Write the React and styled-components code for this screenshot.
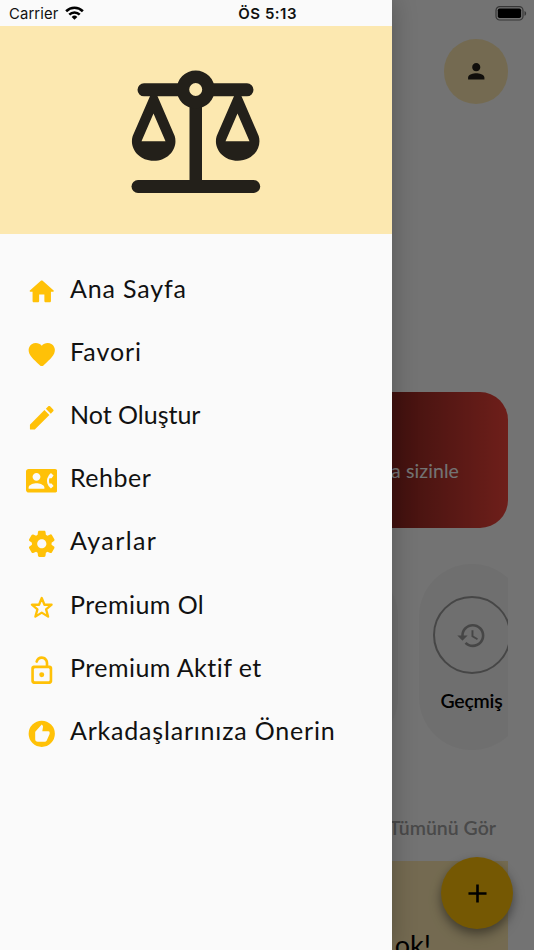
import React from "react";
import styled, { createGlobalStyle } from "styled-components";
import { MdContactPhone, MdRecommend, MdPerson, MdHistory, MdAdd } from "react-icons/md";

const GlobalStyle = createGlobalStyle`
  * { box-sizing: border-box; }
  body { margin: 0; background: #fafafa; font-family: Lato, sans-serif; }
  svg { display: block; flex: none; }
`;

const Screen = styled.div`
  position: relative;
  width: 534px;
  height: 950px;
  overflow: hidden;
  background: #fafafa;
`;

const Page = styled.main`
  display: flex;
  flex-direction: column;
  height: 950px;
  padding: 0 26px;
  overflow: hidden;
`;

const BatteryBar = styled.div`
  display: flex;
  justify-content: flex-end;
  height: 39px;
  flex: none;
  padding-top: 6px;
  margin-right: -20px;
`;

const Avatar = styled.div`
  display: flex;
  align-items: center;
  justify-content: center;
  align-self: flex-end;
  width: 64.5px;
  height: 64.5px;
  flex: none;
  border-radius: 50%;
  background: #fce8b0;
  color: #23201a;
`;

const Banner = styled.section`
  display: flex;
  align-items: center;
  justify-content: flex-end;
  height: 136px;
  flex: none;
  margin-top: 288.5px;
  padding: 20px 49px 0 0;
  border-radius: 28px;
  background: linear-gradient(90deg, #000 0%, #701d19 69%, #f0443a 100%);
  color: #fafafa;
  font-size: 19.5px;
  letter-spacing: 0.1px;
  white-space: nowrap;
`;

const Categories = styled.section`
  display: flex;
  justify-content: flex-start;
  gap: 21px;
  height: 186px;
  flex: none;
  margin-top: 36px;
  margin-left: 265.5px;
  overflow: hidden;
`;

const Category = styled.div`
  display: flex;
  flex-direction: column;
  align-items: center;
  flex: none;
  width: 106px;
  height: 186px;
  padding-top: 32px;
  border-radius: 53px;
  background: #f1f1f1;
  font-size: 19.5px;
  line-height: 24px;
  letter-spacing: -0.2px;
  font-weight: 600;
`;

const Ring = styled.div`
  display: flex;
  align-items: center;
  justify-content: center;
  width: 78px;
  height: 78px;
  flex: none;
  margin-bottom: 15px;
  border: 2.5px solid #999;
  border-radius: 50%;
  color: #999;
`;

const SeeAll = styled.div`
  align-self: flex-end;
  flex: none;
  margin: 66px 12px 0 0;
  color: #a0a0a0;
  font-size: 19.5px;
  line-height: 24px;
  font-weight: 600;
  white-space: nowrap;
`;

const NoteCard = styled.section`
  display: flex;
  justify-content: flex-end;
  height: 160px;
  flex: none;
  margin-top: 21px;
  padding: 66px 77px 0 0;
  background: #fce8b0;
  font-size: 27px;
  line-height: 36px;
`;

const AddButton = styled.button`
  position: absolute;
  right: 21px;
  bottom: 21px;
  display: flex;
  align-items: center;
  justify-content: center;
  width: 72px;
  height: 72px;
  padding: 0;
  border: 0;
  border-radius: 50%;
  background: #ffc107;
  color: #000;
  box-shadow: 0 4px 8px rgba(0, 0, 0, 0.28), 0 7px 14px rgba(0, 0, 0, 0.2);
`;

const Scrim = styled.div`
  position: absolute;
  inset: 0;
  background: rgba(0, 0, 0, 0.54);
`;

const Drawer = styled.aside`
  position: absolute;
  inset: 0 auto 0 0;
  display: flex;
  flex-direction: column;
  width: 392px;
  background: #fafafa;
  box-shadow: 2px 0 22px rgba(0, 0, 0, 0.22);
`;

const StatusBar = styled.div`
  display: grid;
  grid-template-columns: 55.5px 1fr auto;
  align-items: center;
  height: 26px;
  flex: none;
  padding: 1px 95px 0 9px;
  font-family: Inter, sans-serif;
  color: #111;
`;

const Carrier = styled.span`
  font-size: 14.8px;
  letter-spacing: 0.15px;
`;

const Clock = styled.span`
  font-size: 15px;
  font-weight: 600;
  letter-spacing: 0.5px;
`;

const DrawerHeader = styled.header`
  display: flex;
  justify-content: center;
  height: 208px;
  flex: none;
  padding-top: 44px;
  background: #fce8b0;
`;

const Menu = styled.nav`
  display: flex;
  flex-direction: column;
  padding: 26px 26px 0 25.5px;
`;

const MenuItem = styled.a`
  display: flex;
  align-items: center;
  gap: 13px;
  height: 63.15px;
  color: #ffc107;
`;

const Label = styled.span`
  margin-top: -7.5px;
  color: #111;
  font-size: 25px;
  line-height: 32px;
  letter-spacing: ${(p) => p.$spacing}px;
  font-variant-ligatures: none;
  white-space: nowrap;
`;

const paths = {
  home: "M10 19v-5h4v5c0 .55.45 1 1 1h3c.55 0 1-.45 1-1v-7h1.7c.46 0 .68-.57.33-.87L12.67 3.6c-.38-.34-.96-.34-1.34 0l-8.36 7.53c-.34.3-.13.87.33.87H5v7c0 .55.45 1 1 1h3c.55 0 1-.45 1-1z",
  heart: "M13.35 20.13c-.76.69-1.93.69-2.69-.01l-.11-.1C5.3 15.27 1.87 12.16 2 8.28c.06-1.7.93-3.33 2.34-4.29 2.64-1.8 5.9-.96 7.66 1.1 1.76-2.06 5.02-2.91 7.66-1.1 1.41.96 2.28 2.59 2.34 4.29.14 3.88-3.3 6.99-8.55 11.76l-.1.09z",
  edit: "M3 17.46v3.04c0 .28.22.5.5.5h3.04c.13 0 .26-.05.35-.15L17.81 9.94l-3.75-3.75L3.15 17.1c-.1.1-.15.22-.15.36zM20.71 7.04c.39-.39.39-1.02 0-1.41l-2.34-2.34c-.39-.39-1.02-.39-1.41 0l-1.83 1.83 3.75 3.75 1.83-1.83z",
  settings: "M19.5 12c0-.23-.01-.45-.03-.68l1.86-1.41c.4-.3.51-.86.26-1.3l-1.87-3.23a.987.987 0 0 0-1.25-.42l-2.15.91c-.37-.26-.76-.49-1.17-.68l-.29-2.31c-.06-.5-.49-.88-.99-.88h-3.73c-.51 0-.94.38-1 .88l-.29 2.31c-.41.19-.8.42-1.17.68l-2.15-.91c-.46-.2-1-.02-1.25.42L2.41 8.62c-.25.44-.14.99.26 1.3l1.86 1.41a7.343 7.343 0 0 0 0 1.35l-1.86 1.41c-.4.3-.51.86-.26 1.3l1.87 3.23c.25.44.79.62 1.25.42l2.15-.91c.37.26.76.49 1.17.68l.29 2.31c.06.5.49.88.99.88h3.73c.5 0 .93-.38.99-.88l.29-2.31c.41-.19.8-.42 1.17-.68l2.15.91c.46.2 1 .02 1.25-.42l1.87-3.23c.25-.44.14-.99-.26-1.3l-1.86-1.41c.03-.23.04-.45.04-.68zm-7.46 3.5c-1.93 0-3.5-1.57-3.5-3.5s1.57-3.5 3.5-3.5 3.5 1.57 3.5 3.5-1.57 3.5-3.5 3.5z",
  lock: "M12 13.2a1.9 1.9 0 1 0 0 3.8 1.9 1.9 0 0 0 0-3.8zM18 8h-1V6c0-2.76-2.24-5-5-5-2.28 0-4.27 1.54-4.84 3.75-.14.54.18 1.08.72 1.22.53.14 1.08-.18 1.22-.72C9.44 3.93 10.63 3 12 3c1.65 0 3 1.35 3 3v2H6c-1.1 0-2 .9-2 2v10c0 1.1.9 2 2 2h12c1.1 0 2-.9 2-2V10c0-1.1-.9-2-2-2zm0 11c0 .55-.45 1-1 1H7c-.55 0-1-.45-1-1v-8c0-.55.45-1 1-1h10c.55 0 1 .45 1 1v8z",
};

const Glyph = ({ name }) => (
  <svg width="31.5" height="31.5" viewBox="0 0 24 24" fill="currentColor">
    <path d={paths[name]} />
  </svg>
);

const Star = () => (
  <svg width="31.5" height="31.5" viewBox="0 0 24 24" fill="none" stroke="currentColor" strokeWidth="1.75" strokeLinejoin="round">
    <path d="M12 4.600l2.050 5.100h5.450l-4.200 3.550 1.550 5.500L12 15.700l-4.850 3.050 1.550-5.500L4.500 9.700h5.450z" />
  </svg>
);

const Scales = () => (
  <svg width="130" height="124" viewBox="11.5 10 130 124">
    <g fill="#23201a">
      <path d="M24.500 23.300H60v13H24.500a6.500 6.500 0 0 1 0-13zM92 23.300h35.500a6.500 6.500 0 0 1 0 13H92z" />
      <rect x="12" y="120" width="128.700" height="13" rx="6.500" />
      <rect x="70" y="40" width="12.500" height="84" />
      <path fillRule="evenodd" d="M76.200 10.500a19 19 0 1 1 0 38 19 19 0 0 1 0-38zM76.200 23a6.500 6.500 0 1 0 0 13 6.500 6.500 0 0 0 0-13z" />
      <path fillRule="evenodd" d="M31 35h6.500L55.200 76c3.600 12-6 24.700-21 24.700s-24.700-12.700-21-24.700zM34 53.500L22 81.200h24z" />
      <path fillRule="evenodd" d="M115 35h6.500L139.200 76c3.600 12-6 24.700-21 24.700s-24.700-12.700-21-24.700zM118 53.500L106 81.200h24z" />
    </g>
  </svg>
);

const Wifi = () => (
  <svg width="19" height="14.500" viewBox="0 0 20 15" fill="none" stroke="#000" strokeWidth="2.700">
    <path d="M1.200 5.400a12.500 12.500 0 0 1 17.600 0" />
    <path d="M4.500 8.900a7.800 7.800 0 0 1 11 0" />
    <path d="M7 11.400a4.300 4.300 0 0 1 6 0L10 14.400z" fill="#000" stroke="none" />
  </svg>
);

const Battery = () => (
  <svg width="33" height="15" viewBox="0 0 33 15">
    <rect x="1" y=".7" width="27" height="13.300" rx="3.700" fill="none" stroke="#777" strokeWidth="1.200" />
    <rect x="2.800" y="2.500" width="23.300" height="9.600" rx="1.800" fill="#000" />
    <path d="M29.500 5v4.800c2.200-.8 2.200-4 0-4.800z" fill="#777" />
  </svg>
);

const items = [
  { label: "Ana Sayfa", icon: <Glyph name="home" />, spacing: 0.85 },
  { label: "Favori", icon: <Glyph name="heart" />, spacing: 0.95 },
  { label: "Not Oluştur", icon: <Glyph name="edit" />, spacing: 0 },
  { label: "Rehber", icon: <MdContactPhone size={31.5} />, spacing: 0.5 },
  { label: "Ayarlar", icon: <Glyph name="settings" />, spacing: 1.4 },
  { label: "Premium Ol", icon: <Star />, spacing: 0.45 },
  { label: "Premium Aktif et", icon: <Glyph name="lock" />, spacing: 0.45 },
  { label: "Arkadaşlarınıza Önerin", icon: <MdRecommend size={31.5} />, spacing: 0.8 },
];

export default function App() {
  return (
    <Screen>
      <GlobalStyle />
      <Page>
        <BatteryBar><Battery /></BatteryBar>
        <Avatar><MdPerson size={24.5} /></Avatar>
        <Banner>a sizinle</Banner>
        <Categories>
          <Category />
          <Category>
            <Ring><MdHistory size={31} /></Ring>
            Geçmiş
          </Category>
        </Categories>
        <SeeAll>Tümünü Gör</SeeAll>
        <NoteCard>ok!</NoteCard>
      </Page>
      <AddButton aria-label="+"><MdAdd size={31} /></AddButton>
      <Scrim />
      <Drawer>
        <StatusBar>
          <Carrier>Carrier</Carrier>
          <Wifi />
          <Clock>ÖS 5:13</Clock>
        </StatusBar>
        <DrawerHeader><Scales /></DrawerHeader>
        <Menu>
          {items.map(({ label, icon, spacing }) => (
            <MenuItem key={label}>
              {icon}
              <Label $spacing={spacing}>{label}</Label>
            </MenuItem>
          ))}
        </Menu>
      </Drawer>
    </Screen>
  );
}
